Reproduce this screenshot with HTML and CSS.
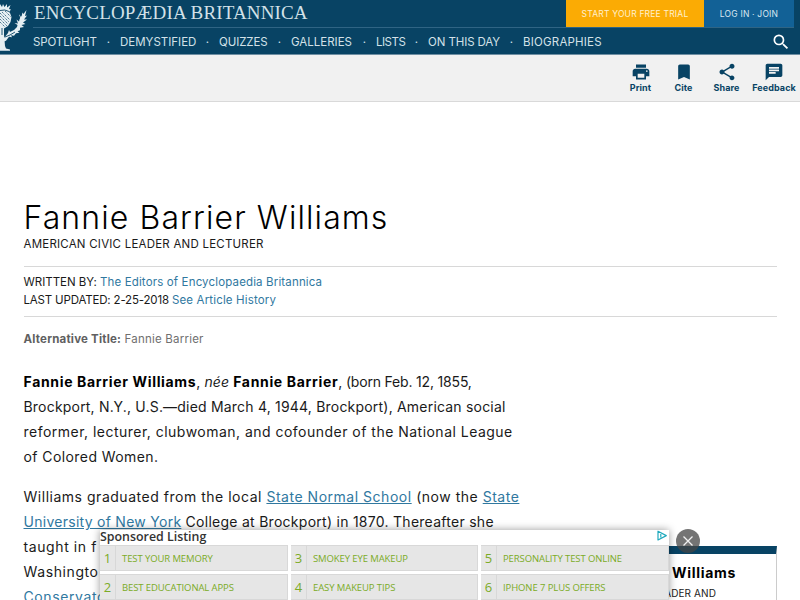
FILE: index.html
```html
<!DOCTYPE html>
<html lang="en">
<head>
    <meta charset="UTF-8">
    <meta name="viewport" content="width=device-width, initial-scale=1.0">
    <title>Fannie Barrier Williams | Britannica</title>
    <link rel="stylesheet" href="styles.css">
</head>
<body>
    <header class="header">
        <svg class="thistle" width="28" height="54" viewBox="0 0 28 54">
            <g fill="#e6eff3">
                <path d="M0 4l2 3 1-3 1.500 3L7 4l0 3.500L10.500 5 9 9l2 .5-2 2.500 1 1 1.500 4-1 5-2.500 4L4 28.500l0 6 .5 5.500.5 6 1 2.500 4 1v1.300H0z"/>
                <path d="M4 38l4-5 1-3 1 2 4-2 3-3 .5-2-3-2 3.500.5-1.500-4 2.500 2 1-4-1-3 2.500 2 1-4 1 1.500 3-4-1.500 6 2-.5-3 4 3 0-4 3 2.500 1.500-4 1 2.500 2-4 .8 0 2.500-2.500 1 2 1.500-3.500.5-2 2.500-3-.5 1 2-3-.5-3 4-3 1z"/>
            </g>
            <g fill="none" stroke="#084364">
                <path stroke-width=".8" stroke-dasharray="1.200 1" d="M0 13l9 9M0 16l8 8M0 19l7 7M0 22l5 5M2 12l8 8M5 11l6 6"/>
                <path stroke-width=".9" d="M0 10.500q5-1.500 9 1M2 28v7M5 37l5-2 5-3M19 19l2-5"/>
            </g>
        </svg>
        <div class="header-main">
            <div class="brand-row">
                <a class="brand">ENCYCLOPÆDIA BRITANNICA</a>
                <div class="account">
                    <a class="trial">START YOUR FREE TRIAL</a>
                    <a class="login">LOG IN · JOIN</a>
                </div>
            </div>
            <nav class="nav">
                <a class="n1">SPOTLIGHT</a><i>·</i>
                <a class="n2">DEMYSTIFIED</a><i>·</i>
                <a class="n3">QUIZZES</a><i>·</i>
                <a class="n4">GALLERIES</a><i>·</i>
                <a class="n5">LISTS</a><i>·</i>
                <a class="n6">ON THIS DAY</a><i>·</i>
                <a class="n7">BIOGRAPHIES</a>
                <svg class="search" width="20" height="20" viewBox="0 0 24 24"><path fill="#fff" d="M15.5 14h-.79l-.28-.27A6.47 6.47 0 0 0 16 9.5 6.5 6.5 0 1 0 9.5 16c1.61 0 3.09-.59 4.23-1.57l.27.28v.79l5 4.99L20.49 19l-4.99-5zm-6 0C7.01 14 5 11.99 5 9.5S7.01 5 9.5 5 14 7.01 14 9.5 11.99 14 9.5 14z"/></svg>
            </nav>
        </div>
    </header>

    <div class="toolbar">
        <a class="tool">
            <svg width="20" height="20" viewBox="0 0 24 24"><path d="M19 8H5c-1.66 0-3 1.34-3 3v6h4v4h12v-4h4v-6c0-1.66-1.34-3-3-3zm-3 11H8v-5h8v5zm3-7c-.55 0-1-.45-1-1s.45-1 1-1 1 .45 1 1-.45 1-1 1zm-1-9H6v4h12V3z"/></svg>
            <span>Print</span>
        </a>
        <a class="tool">
            <svg width="20" height="20" viewBox="0 0 24 24"><path d="M17 3H7c-1.1 0-2 .9-2 2v16l7-3 7 3V5c0-1.1-.9-2-2-2z"/></svg>
            <span>Cite</span>
        </a>
        <a class="tool">
            <svg width="20" height="20" viewBox="0 0 24 24"><path d="M18 16.08c-.76 0-1.44.3-1.96.77L8.91 12.7c.05-.23.09-.46.09-.7s-.04-.47-.09-.7l7.05-4.11c.54.5 1.25.81 2.04.81 1.66 0 3-1.34 3-3s-1.34-3-3-3-3 1.34-3 3c0 .24.04.47.09.7L8.04 9.81C7.5 9.31 6.79 9 6 9c-1.66 0-3 1.34-3 3s1.34 3 3 3c.79 0 1.5-.31 2.04-.81l7.12 4.16c-.05.21-.08.43-.08.65 0 1.61 1.31 2.92 2.92 2.92s2.92-1.31 2.92-2.92-1.31-2.92-2.92-2.92z"/></svg>
            <span>Share</span>
        </a>
        <a class="tool wide">
            <svg width="20" height="20" viewBox="0 0 24 24"><path d="M20 2H4c-1.1 0-1.99.9-1.99 2L2 22l4-4h14c1.1 0 2-.9 2-2V4c0-1.1-.9-2-2-2zM6 9h12v2H6V9zm8 5H6v-2h8v2zm4-6H6V6h12v2z"/></svg>
            <span>Feedback</span>
        </a>
    </div>

    <main class="article">
        <h1>Fannie Barrier Williams</h1>
        <div class="subtitle">AMERICAN CIVIC LEADER AND LECTURER</div>
        <div class="meta">
            <div><span class="written">WRITTEN BY: </span><a>The Editors of Encyclopaedia Britannica</a></div>
            <div><span class="updated">LAST UPDATED: 2-25-2018 </span><a>See Article History</a></div>
        </div>
        <div class="alt"><b>Alternative Title:</b> Fannie Barrier</div>
        <div class="columns">
            <div class="text">
                <p>
                    <span class="l1"><b>Fannie Barrier Williams</b>, <em>née</em> <b>Fannie Barrier</b><small>, (born Feb. 12, 1855,</small></span>
                    <span class="l2">Brockport, N.Y., U.S.—died March 4, 1944, Brockport), American social</span>
                    <span class="l3">reformer, lecturer, clubwoman, and cofounder of the National League</span>
                    <span class="l4">of Colored Women.</span>
                </p>
                <p>
                    <span class="l5">Williams graduated from the local <a>State Normal School</a> (now the <a>State</a></span>
                    <span class="l6"><a>University of New York</a> College at Brockport) in 1870. Thereafter she</span>
                    <span class="l7">taught in f</span>
                    <span class="l8">Washingto</span>
                    <span class="l9"><a>Conservatory</a></span>
                </p>
            </div>
            <aside class="facts">
                <h2>Williams</h2>
                <div class="role">LEADER AND</div>
            </aside>
        </div>
    </main>

    <div class="ad">
        <div class="ad-head">
            <span class="ad-title">Sponsored Listing</span>
            <svg width="12" height="12" viewBox="0 0 12 12"><path fill="none" stroke="#1fa9bd" stroke-width="1.2" stroke-linejoin="round" d="M2 1.200v8.800L10.300 5.600zM4.800 4v3.600"/></svg>
        </div>
        <div class="ad-grid">
            <a><b>1</b><span>TEST YOUR MEMORY</span></a>
            <a><b>3</b><span>SMOKEY EYE MAKEUP</span></a>
            <a><b>5</b><span>PERSONALITY TEST ONLINE</span></a>
            <a><b>2</b><span>BEST EDUCATIONAL APPS</span></a>
            <a><b>4</b><span>EASY MAKEUP TIPS</span></a>
            <a><b>6</b><span>IPHONE 7 PLUS OFFERS</span></a>
        </div>
    </div>
    <div class="ad-close">
        <svg width="24" height="24" viewBox="0 0 24 24"><path fill="none" stroke="#f2f2f2" stroke-width="1.3" d="M7.500 7.500l9 9M16.500 7.500l-9 9"/></svg>
    </div>
</body>
</html>
```
FILE: styles.css
```css
* {
    box-sizing: border-box;
}

body {
    margin: 0;
    height: 600px;
    overflow: hidden;
    position: relative;
    background: #fff;
    color: #1a1a1a;
    font-family: Inter, "Open Sans", sans-serif;
    white-space: nowrap;
}

a {
    text-decoration: none;
}

/* header */
.header {
    display: flex;
    height: 55px;
    padding-right: 6px;
    background: #084364;
    border-bottom: 1px solid #6f8fa3;
}

.thistle {
    flex: none;
    margin-right: 5px;
}

.header-main {
    flex: 1;
}

.brand-row {
    display: flex;
    justify-content: space-between;
    height: 28px;
    border-bottom: 1px solid #2f6484;
}

.brand {
    padding-left: 1px;
    color: #d3e1e8;
    font-family: "Liberation Serif", serif;
    font-size: 19px;
    line-height: 26px;
    letter-spacing: 0.15px;
}

.account {
    display: flex;
    font-size: 8.5px;
    line-height: 28px;
    text-align: center;
    letter-spacing: 0.2px;
}

.trial {
    width: 138px;
    height: 27px;
    background: #fbab04;
    color: #fff0cf;
}

.login {
    width: 90px;
    height: 27px;
    background: #126196;
    color: #dbe8f1;
}

.nav {
    display: flex;
    align-items: center;
    height: 27px;
    color: #d3e1e8;
    font-size: 11.5px;
}

.nav i {
    width: 23px;
    text-align: center;
    font-style: normal;
}

.n1 {
    width: 64px;
    letter-spacing: -0.1px;
}

.n2 {
    width: 76px;
}

.n3 {
    width: 49px;
    letter-spacing: -0.1px;
}

.n4 {
    width: 62px;
}

.n5 {
    width: 29px;
    letter-spacing: -0.5px;
}

.n6 {
    width: 72px;
    letter-spacing: -0.1px;
}

.n7 {
    letter-spacing: 0.2px;
}

.search {
    margin-left: auto;
    margin-right: 3px;
}

/* toolbar */
.toolbar {
    display: flex;
    justify-content: flex-end;
    height: 47px;
    padding: 7px 2px 0 0;
    background: #f1f1f1;
    border-bottom: 1px solid #d9d9d9;
}

.tool {
    display: flex;
    flex-direction: column;
    align-items: center;
    width: 43px;
    color: #084364;
    font-size: 9px;
    font-weight: 700;
    line-height: 12px;
    letter-spacing: 0.1px;
}

.tool svg {
    fill: #084364;
}

.tool.wide {
    width: 48px;
    margin-left: 2px;
}

/* article */
.article {
    padding: 97px 23px 0 23.5px;
}

h1 {
    margin: 0;
    height: 38px;
    color: #000;
    font-size: 32px;
    font-weight: 300;
    line-height: 38px;
    letter-spacing: 1.1px;
}

.subtitle {
    height: 29px;
    font-size: 11.5px;
    line-height: 14px;
    letter-spacing: 0.22px;
}

.meta {
    height: 51px;
    padding-top: 6px;
    border-top: 1px solid #d8d8d8;
    border-bottom: 1px solid #d8d8d8;
    font-size: 11.5px;
    line-height: 18px;
    letter-spacing: 0.15px;
}

.written {
    letter-spacing: -0.02px;
}

.updated {
    letter-spacing: -0.17px;
}

.meta a,
.text a {
    color: #30789f;
}

.alt {
    height: 52px;
    padding-top: 13px;
    color: #707070;
    font-size: 11.5px;
    line-height: 18px;
    letter-spacing: 0.21px;
}

.alt b {
    color: #606060;
}

.columns {
    display: flex;
    justify-content: space-between;
}

.text p {
    margin: 0 0 15px;
    font-size: 14px;
    line-height: 25px;
}

.text p span {
    display: block;
}

.text b {
    color: #000;
    font-weight: 700;
    letter-spacing: 0.66px;
}

.text a {
    text-decoration: underline;
}

.text small {
    font-size: 14px;
    letter-spacing: -0.18px;
}

.l1 {
    letter-spacing: 0.1px;
}

.l2 {
    letter-spacing: 0.2px;
}

.l3 {
    letter-spacing: 0.48px;
}

.l4 {
    letter-spacing: 0.42px;
}

.l5 {
    letter-spacing: 0.52px;
}

.l6 {
    letter-spacing: 0.27px;
}

.l7,
.l8,
.l9 {
    letter-spacing: 0.6px;
}

.facts {
    width: 246px;
    height: 54px;
    margin-top: 177px;
    padding: 9px 40px 0 0;
    border: 1px solid #ccc;
    border-top: 8px solid #084364;
    border-bottom: none;
    text-align: right;
}

.facts h2 {
    margin: 0;
    color: #000;
    font-size: 14px;
    font-weight: 700;
    line-height: 20px;
    letter-spacing: 0.7px;
}

.role {
    margin-right: 20px;
    font-size: 10px;
    line-height: 20px;
    letter-spacing: 0.1px;
}

/* sponsored overlay */
.ad {
    position: absolute;
    left: 100px;
    top: 530px;
    width: 569px;
    height: 70px;
    background: #fff;
    box-shadow: 0 0 8px rgba(0, 0, 0, 0.4);
    font-family: "Open Sans", sans-serif;
}

.ad-head {
    display: flex;
    justify-content: space-between;
    height: 15px;
    padding-right: 1px;
}

.ad-title {
    color: #333;
    font-size: 12.4px;
    font-weight: 600;
    line-height: 13px;
}

.ad-grid {
    display: grid;
    grid-template-columns: 188px 187px 188px;
    grid-auto-rows: 26px;
    gap: 3px;
}

.ad-grid a {
    display: flex;
    align-items: center;
    background: #e6e6e6;
    border: 1px solid #d8d8d8;
    border-left: none;
    color: #7bab26;
    font-size: 9.5px;
    letter-spacing: -0.1px;
}

.ad-grid b {
    width: 16px;
    height: 24px;
    margin-right: 6px;
    border-right: 1px solid #d8d8d8;
    font-size: 13px;
    font-weight: 400;
    line-height: 24px;
    text-align: center;
}

.ad-close {
    position: absolute;
    left: 676px;
    top: 529px;
    width: 24px;
    height: 24px;
    border-radius: 50%;
    background: rgba(70, 70, 70, 0.75);
}

.ad-close svg {
    display: block;
}
```
